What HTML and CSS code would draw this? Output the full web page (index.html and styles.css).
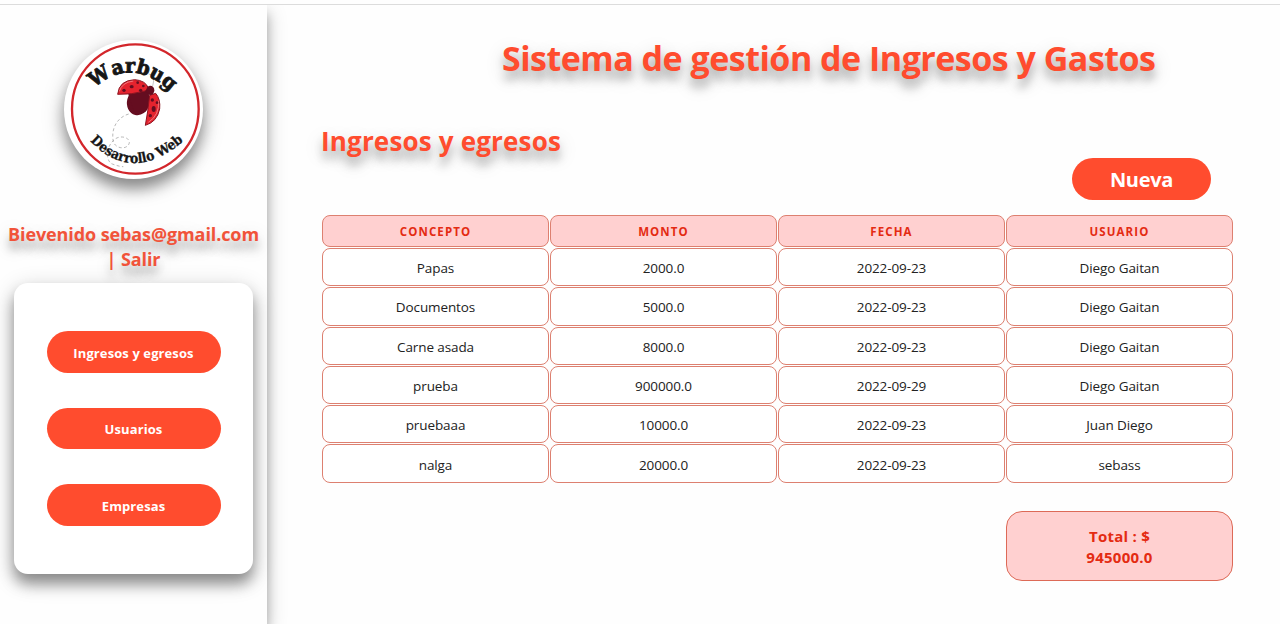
FILE: index.html
```
<!DOCTYPE html>
<html lang="es">
<head>
<meta charset="utf-8">
<title>Sistema de gestión de Ingresos y Gastos</title>
<link rel="stylesheet" href="styles.css">
</head>
<body>
<div class="layout">
  <aside class="sidebar">
    <svg class="logo" viewBox="30 30 417 417" role="img" aria-label="Warbug Desarrollo Web">
      <defs>
        <path id="arc-top" d="M121 174 Q232 76 351 186"/>
        <path id="arc-bottom" d="M108 333 Q235 466 390 332"/>
      </defs>
      <ellipse cx="244" cy="237" rx="190" ry="194" fill="#fff" stroke="#d3262b" stroke-width="7"/>
      <g fill="none" stroke="#aaa" stroke-width="2.5" stroke-dasharray="9 7">
        <path d="M224 252C190 262 170 295 178 335C185 358 222 360 226 338C226 318 192 316 180 330C155 350 155 395 175 402C188 407 200 410 208 410"/>
      </g>
      <path d="M284 132Q306 134 296 168" fill="none" stroke="#aaa" stroke-width="2"/>
      <ellipse cx="253" cy="216" rx="34" ry="40" transform="rotate(14 253 216)" fill="#650d20"/>
      <path d="M222 190L280 178L288 204L274 245L240 245Z" fill="#650d20"/>
      <path d="M191 193Q195 151 242 149Q274 151 283 174L273 183Q234 194 191 193Z" fill="#e5232e" stroke="#8b1522" stroke-width="3"/>
      <path d="M287 196L305 190Q320 207 317 237Q309 276 274 286Q282 244 287 196Z" fill="#e5232e" stroke="#8b1522" stroke-width="3"/>
      <path d="M196 184Q204 157 238 153M313 212Q318 255 283 277" fill="none" stroke="#f7a3a3" stroke-width="2"/>
      <ellipse cx="289" cy="181" rx="12" ry="14" fill="#650d20"/>
      <g fill="#650d20">
        <circle cx="210" cy="181" r="5"/><ellipse cx="233" cy="170" rx="6" ry="5"/><circle cx="260" cy="181" r="5"/><circle cx="251" cy="158" r="4"/><circle cx="268" cy="168" r="4"/>
        <circle cx="295" cy="210" r="5"/><ellipse cx="299" cy="237" rx="6" ry="9"/><circle cx="289" cy="257" r="5"/><circle cx="309" cy="218" r="4"/>
      </g>
      <text class="logo-name" dx="0 8"><textPath href="#arc-top" textLength="256" lengthAdjust="spacingAndGlyphs">Warbug</textPath></text>
      <text class="logo-tag"><textPath href="#arc-bottom" textLength="318" lengthAdjust="spacingAndGlyphs">Desarrollo Web</textPath></text>
    </svg>
    <h3 class="welcome">Bievenido sebas@gmail.com<br>| Salir</h3>
    <nav class="menu">
      <a class="pill">Ingresos y egresos</a>
      <a class="pill">Usuarios</a>
      <a class="pill">Empresas</a>
    </nav>
  </aside>
  <main class="content">
    <h1 class="title">Sistema de gestión de Ingresos y Gastos</h1>
    <h2 class="subtitle">Ingresos y egresos</h2>
    <div class="actions"><a class="pill new">Nueva</a></div>
    <div class="table">
      <div class="head">CONCEPTO</div><div class="head">MONTO</div><div class="head">FECHA</div><div class="head">USUARIO</div>
      <div>Papas</div><div>2000.0</div><div>2022-09-23</div><div>Diego Gaitan</div>
      <div>Documentos</div><div>5000.0</div><div>2022-09-23</div><div>Diego Gaitan</div>
      <div>Carne asada</div><div>8000.0</div><div>2022-09-23</div><div>Diego Gaitan</div>
      <div>prueba</div><div>900000.0</div><div>2022-09-29</div><div>Diego Gaitan</div>
      <div>pruebaaa</div><div>10000.0</div><div>2022-09-23</div><div>Juan Diego</div>
      <div>nalga</div><div>20000.0</div><div>2022-09-23</div><div>sebass</div>
    </div>
    <div class="total">Total : $<br>945000.0</div>
  </main>
</div>
</body>
</html>
```
FILE: styles.css
```
* { box-sizing: border-box; }
body {
  margin: 0;
  padding-top: 4px;
  background: #fefefe;
  font-family: "Segoe UI", "Open Sans", "Noto Sans", sans-serif;
  color: #222;
}
.layout {
  display: flex;
  height: 620px;
  border-top: 1px solid #dcdcdc;
  overflow: hidden;
}
.sidebar {
  display: flex;
  flex: 0 0 267px;
  flex-direction: column;
  align-items: center;
  padding-top: 35px;
  background: #fefefe;
  box-shadow: 0 10px 10px rgba(0,0,0,.25), 0 6px 20px rgba(0,0,0,.2);
}
.logo {
  width: 139px;
  height: 139px;
  border-radius: 50%;
  background: #fff;
  box-shadow: 0 10px 14px rgba(0,0,0,.36), 0 6px 24px rgba(0,0,0,.2);
}
.logo-name, .logo-tag {
  font-family: "DejaVu Serif", serif;
  font-weight: bold;
  fill: #161616;
  stroke: #161616;
}
.logo-name { font-size: 60px; stroke-width: 2.5px; }
.logo-tag { font-size: 41px; stroke-width: 1px; }
.title, .subtitle, .welcome {
  margin: 0;
  color: #ff4c2e;
  font-weight: 700;
  white-space: nowrap;
  text-shadow: 0 9px 9px rgba(0,0,0,.25), 0 6px 20px rgba(0,0,0,.2);
}
.welcome {
  margin-top: 43px;
  font-size: 18px;
  letter-spacing: -.1px;
  line-height: 25px;
  text-align: center;
  color: #f1533a;
}
.menu {
  display: flex;
  flex-direction: column;
  align-items: center;
  gap: 35px;
  width: 239px;
  height: 291px;
  margin-top: 11px;
  padding-top: 48px;
  border-radius: 14px;
  background: #fff;
  box-shadow: 0 10px 14px rgba(0,0,0,.36), 0 6px 24px rgba(0,0,0,.2);
}
.pill {
  display: flex;
  align-items: center;
  justify-content: center;
  width: 174px;
  height: 41.6px;
  padding-top: 2px;
  border-radius: 21px;
  background: #ff4c2e;
  color: #fff;
  font-size: 13px;
  font-weight: 700;
  letter-spacing: .1px;
  line-height: 20px;
}
.content {
  display: flex;
  flex: 1;
  flex-direction: column;
  padding: 26px 47px 0 55px;
}
.title {
  padding-left: 180px;
  font-size: 34px;
  letter-spacing: -.5px;
  line-height: 54px;
}
.subtitle {
  margin-top: 36px;
  margin-left: -1px;
  font-size: 26px;
  letter-spacing: .17px;
  line-height: 40px;
}
.actions {
  display: flex;
  justify-content: flex-end;
  margin-top: -3px;
  padding-right: 22px;
}
.new { width: 139px; padding-top: 3px; font-size: 20px; letter-spacing: -.3px; }
.table {
  display: grid;
  grid-template-columns: repeat(4, 1fr);
  grid-template-rows: 32px repeat(6, 38.3px);
  gap: 1px;
  margin-top: 15.4px;
}
.table > div {
  display: flex;
  align-items: center;
  justify-content: center;
  padding-top: 2px;
  border: 1px solid #dd8070;
  border-radius: 8px;
  background: #fff;
  font-size: 13.5px;
  letter-spacing: -.1px;
}
.table > .head {
  background: #ffd0d0;
  color: #e42b12;
  font-size: 11.5px;
  font-weight: 700;
  letter-spacing: 1.1px;
}
.total {
  align-self: flex-end;
  width: 227px;
  height: 70px;
  margin-top: 28px;
  padding-top: 14px;
  border: 1px solid #dd6a57;
  border-radius: 16px;
  background: #ffd0d0;
  color: #e42b12;
  font-size: 15px;
  font-weight: 700;
  letter-spacing: .25px;
  line-height: 21px;
  text-align: center;
}
```
